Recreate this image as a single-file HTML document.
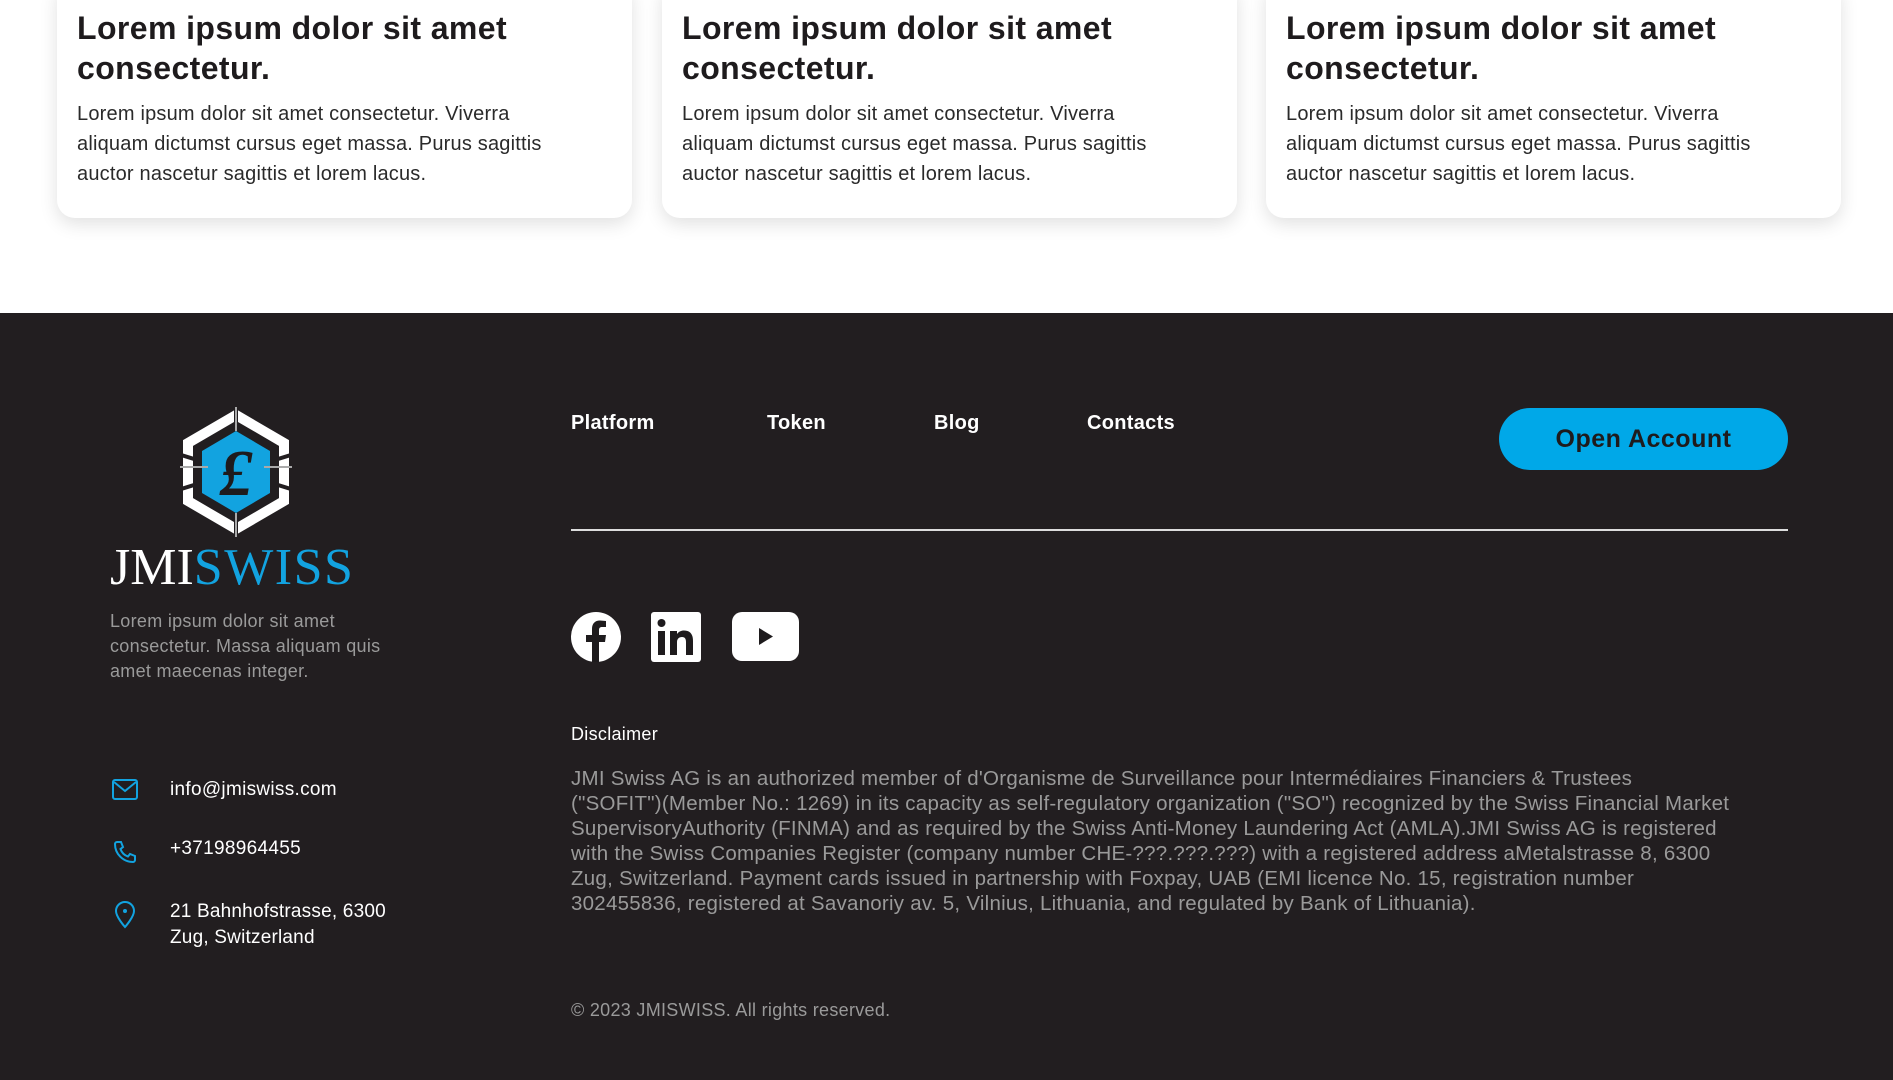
<!DOCTYPE html>
<html><head><meta charset="utf-8"><style>
*{margin:0;padding:0;box-sizing:border-box}
body{width:1893px;height:1080px;overflow:hidden;background:#fff;font-family:"Liberation Sans",sans-serif;position:relative}
.card{position:absolute;top:-20px;width:575px;height:238px;background:#fff;border-radius:18px;box-shadow:0 6px 18px rgba(0,0,0,0.12)}
.card h3{position:absolute;left:20px;top:28px;font-size:32px;line-height:40px;font-weight:bold;color:#1e1b1d;width:540px;letter-spacing:0.4px}
.card p{position:absolute;left:20px;top:119px;font-size:20px;line-height:30px;color:#2a2a2a;white-space:nowrap;letter-spacing:0.2px}
footer{position:absolute;left:0;top:313px;width:1893px;height:767px;background:#221e20;color:#fff}
.a{position:absolute}
.nav{font-weight:bold;font-size:20px;top:99px;letter-spacing:0.3px}
.gray{color:#9a9a9a}
</style></head><body>
<div class="card" style="left:57px"><h3>Lorem ipsum dolor sit amet consectetur.</h3><p>Lorem ipsum dolor sit amet consectetur. Viverra<br>aliquam dictumst cursus eget massa. Purus sagittis<br>auctor nascetur sagittis et lorem lacus.</p></div>
<div class="card" style="left:662px"><h3>Lorem ipsum dolor sit amet consectetur.</h3><p>Lorem ipsum dolor sit amet consectetur. Viverra<br>aliquam dictumst cursus eget massa. Purus sagittis<br>auctor nascetur sagittis et lorem lacus.</p></div>
<div class="card" style="left:1266px"><h3>Lorem ipsum dolor sit amet consectetur.</h3><p>Lorem ipsum dolor sit amet consectetur. Viverra<br>aliquam dictumst cursus eget massa. Purus sagittis<br>auctor nascetur sagittis et lorem lacus.</p></div>
<footer>
<svg class="a" style="left:178px;top:94px" width="116" height="130" viewBox="0 0 116 130">
<polygon points="58,8 106,36 106,94 58,122 10,94 10,36" fill="none" stroke="#fff" stroke-width="10"/>
<path d="M58,0V130M0,47L116,83M0,83L116,47" stroke="#221e20" stroke-width="4"/>
<polygon points="58,24 92,44 92,86 58,106 24,86 24,44" fill="#12a3e0"/>
<path d="M58,0V24M58,106V130M2,60H30M86,60H114" stroke="#aaa" stroke-width="2"/>
<text x="58" y="88" font-family="Liberation Serif" font-style="italic" font-weight="bold" font-size="66" text-anchor="middle" fill="#1e1b1d">£</text>
</svg>
<div class="a" style="left:110px;top:225px;font-family:'Liberation Serif',serif;font-size:52px;line-height:60px;letter-spacing:0px"><span>JMI</span><span style="color:#12a3e0;letter-spacing:1.5px">SWISS</span></div>
<div class="a gray" style="left:110px;top:296px;font-size:18px;line-height:25px;white-space:nowrap;letter-spacing:0.3px">Lorem ipsum dolor sit amet<br>consectetur. Massa aliquam quis<br>amet maecenas integer.</div>
<svg class="a" style="left:112px;top:466px" width="26" height="21" viewBox="0 0 26 21"><rect x="1" y="1" width="24" height="19" rx="2" fill="none" stroke="#12a3e0" stroke-width="2"/><path d="M2,3L13,12L24,3" fill="none" stroke="#12a3e0" stroke-width="2"/></svg>
<div class="a" style="left:170px;top:466px;font-size:19px;letter-spacing:0.3px">info@jmiswiss.com</div>
<svg class="a" style="left:112px;top:527px" width="26" height="24" viewBox="0 0 24 24"><path d="M4,2L8,2L10,7L7.5,9A12,12 0 0 0 15,16.5L17,14L22,16V20A2,2 0 0 1 20,22A18,18 0 0 1 2,4A2,2 0 0 1 4,2Z" fill="none" stroke="#12a3e0" stroke-width="2"/></svg>
<div class="a" style="left:170px;top:525px;font-size:19px;letter-spacing:0.3px">+37198964455</div>
<svg class="a" style="left:114px;top:588px" width="22" height="28" viewBox="0 0 22 28"><path d="M11,26C11,26 2,16 2,10A9,9 0 0 1 20,10C20,16 11,26 11,26Z" fill="none" stroke="#12a3e0" stroke-width="2"/><circle cx="11" cy="10" r="2" fill="#12a3e0"/></svg>
<div class="a" style="left:170px;top:586px;font-size:19px;line-height:26px;letter-spacing:0.2px">21 Bahnhofstrasse, 6300<br>Zug, Switzerland</div>
<div class="a nav" style="left:571px">Platform</div>
<div class="a nav" style="left:767px">Token</div>
<div class="a nav" style="left:934px">Blog</div>
<div class="a nav" style="left:1087px">Contacts</div>
<div class="a" style="left:1499px;top:95px;width:289px;height:62px;border-radius:31px;background:#00a8e8;color:#1e1b1d;font-weight:bold;font-size:25px;line-height:62px;text-align:center;letter-spacing:0.5px">Open Account</div>
<div class="a" style="left:571px;top:216px;width:1217px;height:2px;background:#ddd"></div>
<svg class="a" style="left:571px;top:299px" width="50" height="50" viewBox="0 0 50 50"><circle cx="25" cy="25" r="25" fill="#fff"/><path d="M28,50V30H34L35,23H28V18C28,16 29,15 31,15H35V9C33,9 31,8.5 29,8.5C24,8.5 21,11.5 21,17V23H15V30H21V50Z" fill="#1e1b1d"/></svg>
<svg class="a" style="left:651px;top:299px" width="50" height="50" viewBox="0 0 50 50"><rect width="50" height="50" rx="3" fill="#fff"/><rect x="7" y="19" width="7" height="24" fill="#1e1b1d"/><circle cx="10.5" cy="11" r="4" fill="#1e1b1d"/><path d="M19,19H26V22C28,19.5 30,18.5 33,18.5C39,18.5 42,22 42,29V43H35V30C35,27 34,25 31,25C28,25 26,27 26,30V43H19Z" fill="#1e1b1d"/></svg>
<svg class="a" style="left:732px;top:299px" width="67" height="49" viewBox="0 0 67 49"><rect width="67" height="49" rx="10" fill="#fff"/><polygon points="27,16 27,33 41,24.5" fill="#1e1b1d"/></svg>
<div class="a" style="left:571px;top:411px;font-size:18px;letter-spacing:0.3px">Disclaimer</div>
<div class="a gray" style="left:571px;top:453px;font-size:20.5px;line-height:25px;white-space:nowrap;letter-spacing:0.25px">JMI Swiss AG is an authorized member of d'Organisme de Surveillance pour Intermédiaires Financiers &amp; Trustees<br>("SOFIT")(Member No.: 1269) in its capacity as self-regulatory organization ("SO") recognized by the Swiss Financial Market<br>SupervisoryAuthority (FINMA) and as required by the Swiss Anti-Money Laundering Act (AMLA).JMI Swiss AG is registered<br>with the Swiss Companies Register (company number CHE-???.???.???) with a registered address aMetalstrasse 8, 6300<br>Zug, Switzerland. Payment cards issued in partnership with Foxpay, UAB (EMI licence No. 15, registration number<br>302455836, registered at Savanoriy av. 5, Vilnius, Lithuania, and regulated by Bank of Lithuania).</div>
<div class="a gray" style="left:571px;top:687px;font-size:18px;letter-spacing:0.3px">© 2023 JMISWISS. All rights reserved.</div>
</footer>
</body></html>
